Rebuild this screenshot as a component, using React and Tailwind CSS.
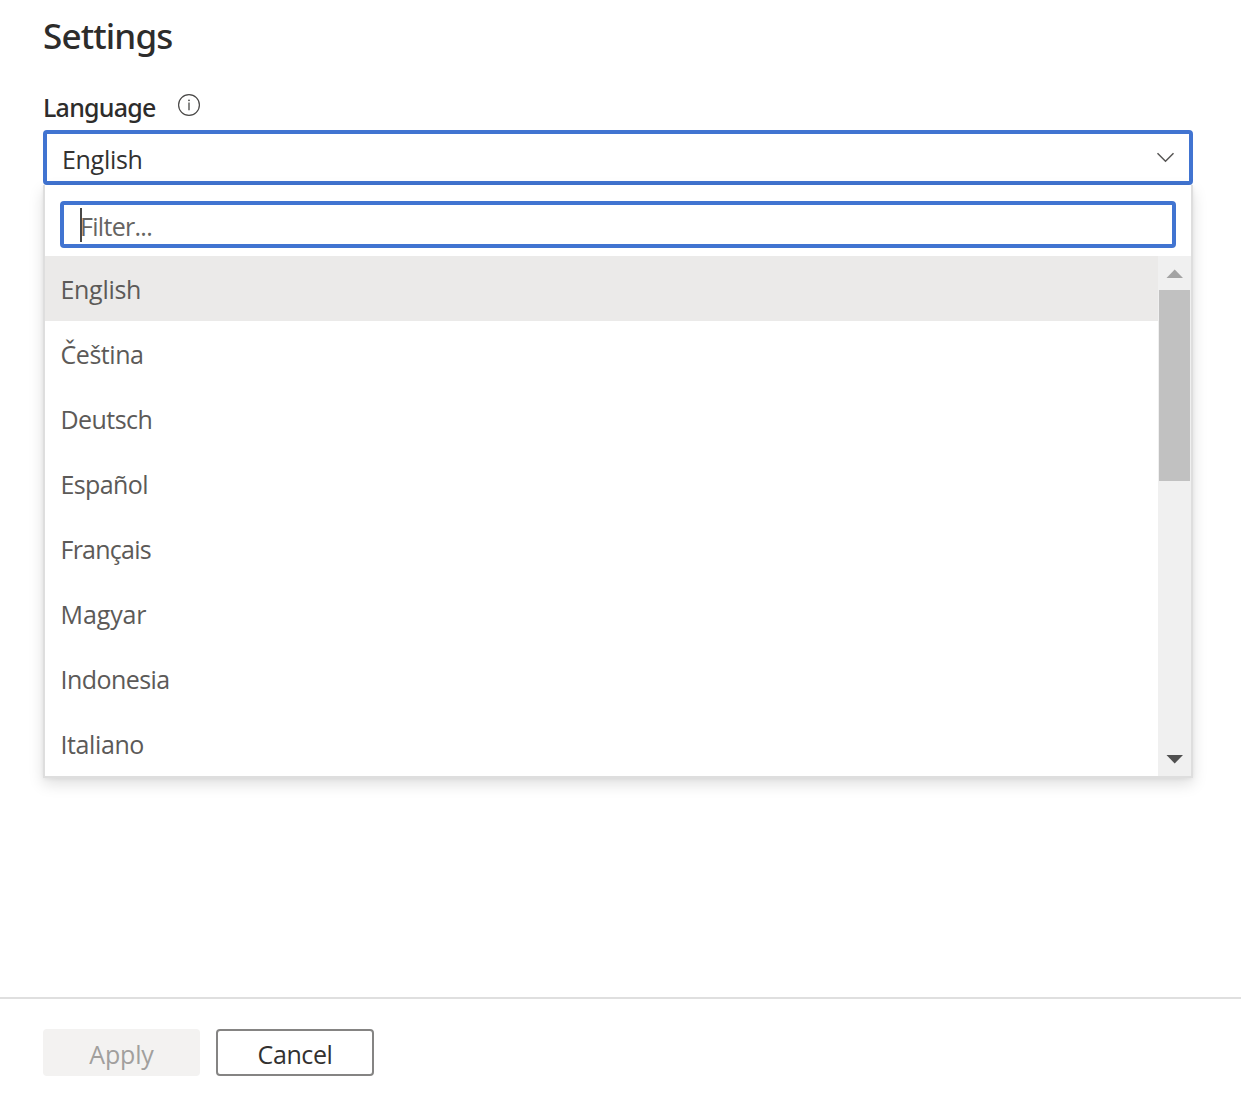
const languages = [
  { name: "English", spacing: "tracking-[-0.3px]", active: true },
  { name: "Čeština", spacing: "tracking-[-0.45px]" },
  { name: "Deutsch", spacing: "tracking-[-0.55px]" },
  { name: "Español", spacing: "tracking-[-0.6px]" },
  { name: "Français", spacing: "tracking-[-0.75px]" },
  { name: "Magyar", spacing: "tracking-[-0.1px]" },
  { name: "Indonesia", spacing: "tracking-[-0.55px]" },
  { name: "Italiano", spacing: "tracking-[-0.4px]" },
];

function InfoIcon() {
  return (
    <svg className="h-6 w-6" viewBox="0 0 24 24" fill="none" stroke="#484746">
      <circle cx="12" cy="12" r="10.4" strokeWidth="1.2" />
      <path d="M12 9.6v7.6" strokeWidth="1.3" />
      <circle cx="12" cy="7.3" r="0.9" fill="#484746" stroke="none" />
    </svg>
  );
}

function Scrollbar() {
  return (
    <div className="flex w-[33px] shrink-0 flex-col items-center bg-[#f0f0f0]">
      <svg className="h-[34px] w-[33px]" viewBox="0 0 33 34">
        <path d="M8.5 22h16.5L16.7 13.5z" fill="#a3a3a3" />
      </svg>
      <div className="h-[191px] w-[31px] bg-[#c1c1c1]" />
      <svg className="mt-auto h-[34px] w-[33px]" viewBox="0 0 33 34">
        <path d="M8.5 13h16.5L16.7 21.5z" fill="#505050" />
      </svg>
    </div>
  );
}

export default function App() {
  return (
    <div className="flex h-[1104px] w-[1241px] flex-col bg-white font-['Open_Sans',sans-serif] text-[25px] text-[#323130]">
      <main className="flex flex-1 flex-col pl-[43px] pr-12">
        <h1 className="mt-4 font-['Noto_Sans',sans-serif] text-[35px] leading-10 font-medium tracking-[-0.85px] text-[#2d2c2b]">
          Settings
        </h1>
        <div className="mt-8 flex h-[42px]">
          <label className="w-[113px] font-['Noto_Sans',sans-serif] leading-[38px] font-medium tracking-[-0.75px] text-[#2d2c2b]">
            Language
          </label>
          <div className="mt-[5px] ml-[21px]">
            <InfoIcon />
          </div>
        </div>
        <div className="flex h-[55px] items-center justify-between rounded-[4px] border-4 border-[#4174d1] pt-[2px] pr-[14px] pl-[15px]">
          <span className="pt-[2px] tracking-[-0.3px]">English</span>
          <svg className="-mt-[2px] h-[11px] w-[19px]" viewBox="0 0 19 11" fill="none" stroke="#555453" strokeWidth="1.5">
            <path d="M1.5 1.3l8 8 8-8" />
          </svg>
        </div>
        <div className="flex h-[593px] flex-col border-2 border-t-0 border-[#dedede] bg-white shadow-[0_6px_14px_rgba(0,0,0,0.13),0_1px_4px_rgba(0,0,0,0.06)]">
          <div className="px-[15px] pt-4 pb-2">
            <div className="flex h-[47px] items-center rounded-[4px] border-4 border-[#4174d1] bg-white pl-4">
              <span className="h-[34px] w-[1.5px] bg-[#484746]" />
              <span className="-ml-[1.5px] pt-1 tracking-[-0.7px] text-[#666462]">Filter...</span>
            </div>
          </div>
          <div className="flex min-h-0 flex-1">
            <ul className="flex-1 overflow-hidden">
              {languages.map((l) => (
                <li
                  key={l.name}
                  className={`h-[65px] pl-[15.5px] leading-[67px] text-[#5c5a58] ${l.spacing} ${l.active ? "bg-[#ebeae9]" : ""}`}
                >
                  {l.name}
                </li>
              ))}
            </ul>
            <Scrollbar />
          </div>
        </div>
      </main>
      <footer className="flex h-[107px] gap-4 border-t-2 border-[#dfdfdf] pt-[30px] pl-[43px]">
        <button className="h-[47px] w-[157px] rounded-[4px] bg-[#f3f2f1] pt-[2px] leading-[47px] tracking-[-0.15px] text-[#a19f9d]">
          Apply
        </button>
        <button className="h-[47px] w-[158px] rounded-[4px] border-2 border-[#858483] bg-white pt-[2px] leading-[43px] tracking-[-0.4px]">
          Cancel
        </button>
      </footer>
    </div>
  );
}
